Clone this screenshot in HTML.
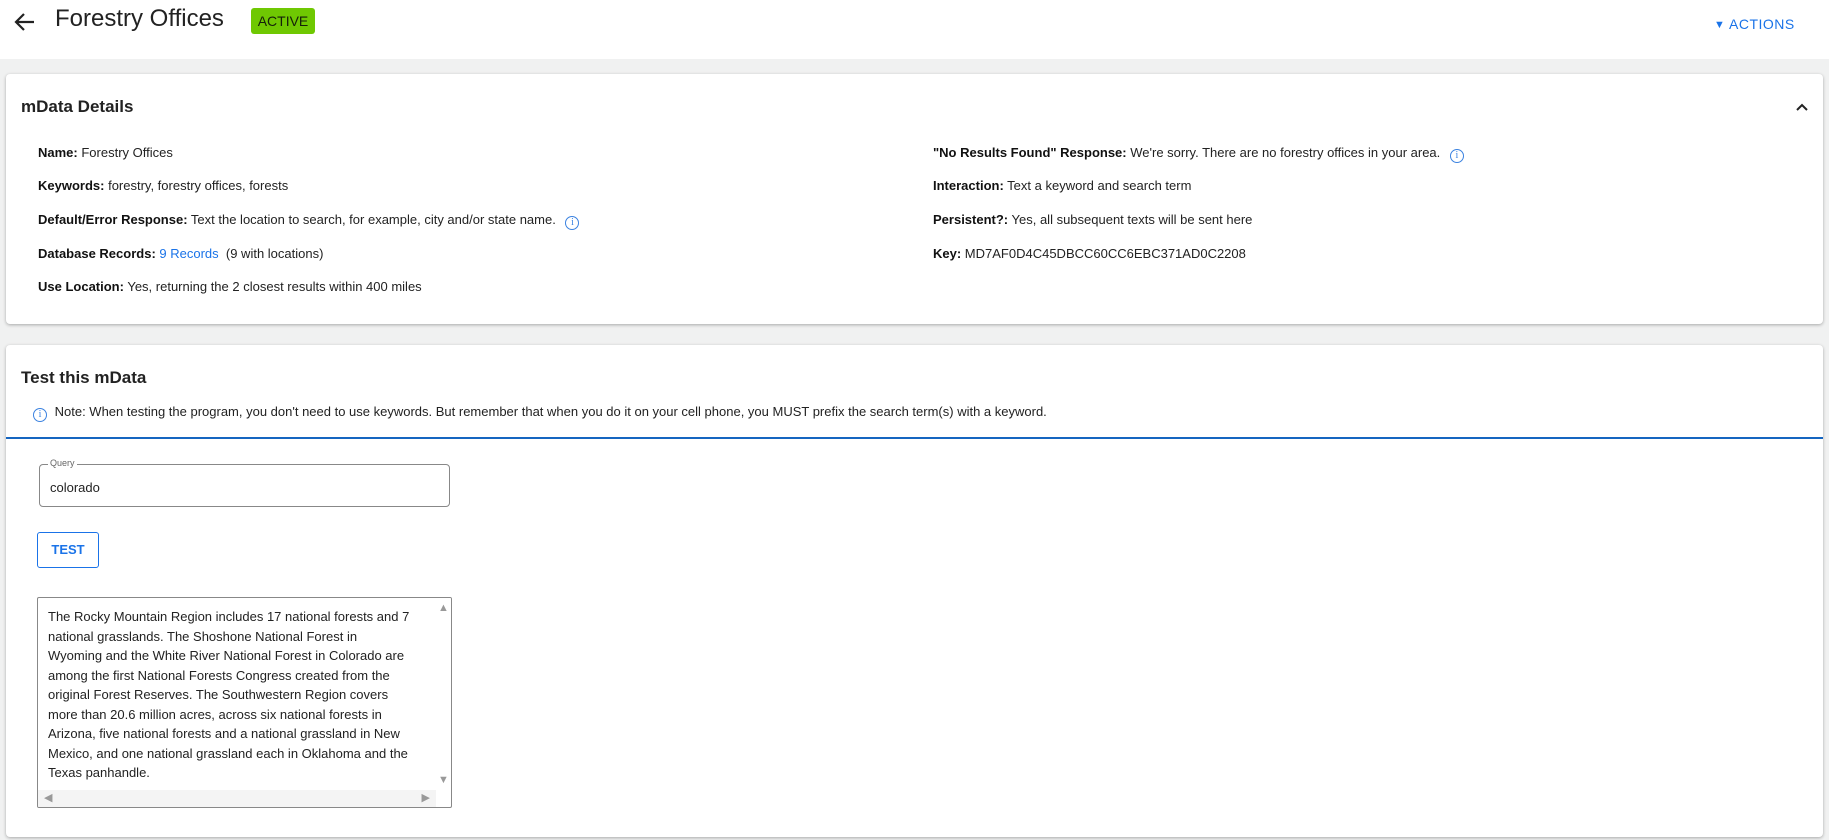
<!DOCTYPE html>
<html><head><meta charset="utf-8"><style>
*{margin:0;padding:0;box-sizing:border-box}
body{width:1829px;height:840px;background:#f0f1f1;font-family:"Liberation Sans",sans-serif;color:#222;position:relative;overflow:hidden}
.a{position:absolute;white-space:nowrap}
.hdr{position:absolute;left:0;top:0;width:1829px;height:59px;background:#fff}
.card{position:absolute;left:6px;width:1817px;background:#fff;border-radius:4px;box-shadow:0 1px 3px rgba(0,0,0,.3)}
.row{position:absolute;font-size:13px;line-height:16px;white-space:nowrap;color:#222}
.row b{font-weight:bold;color:#111}
.info{display:inline-block;width:14px;height:14px;border:1.3px solid #3b82e0;border-radius:50%;color:#3b82e0;font-size:10px;line-height:11px;text-align:center;vertical-align:-1px;margin-left:6px;font-family:"Liberation Serif",serif}
a{color:#1a73e8;text-decoration:none}
</style></head><body>
<div class="hdr"></div>
<svg class="a" style="left:14px;top:12px" width="22" height="20" viewBox="0 0 22 20"><path d="M20 10H3M10 2L2 10l8 8" stroke="#222" stroke-width="2.2" fill="none"/></svg>
<div class="a" style="left:55px;top:5px;font-size:24px;color:#222">Forestry Offices</div>
<div class="a" style="left:251px;top:8px;width:64px;height:26px;background:#6fc802;border-radius:3px;font-size:14px;line-height:26px;text-align:center;color:#15200a">ACTIVE</div>
<div class="a" style="left:1714px;top:16px;font-size:14px;color:#1a73e8;letter-spacing:0.5px;line-height:16px"><span style="font-size:11px;vertical-align:1px">▼</span> ACTIONS</div>

<div class="card" style="top:74px;height:250px"></div>
<div class="a" style="left:21px;top:97px;font-size:17px;font-weight:bold;color:#222">mData Details</div>
<svg class="a" style="left:1795px;top:102px" width="14" height="10" viewBox="0 0 14 10"><path d="M2 8l5-5 5 5" stroke="#222" stroke-width="2" fill="none"/></svg>
<div class="row" style="left:38px;top:145px"><b>Name:</b> Forestry Offices</div>
<div class="row" style="left:38px;top:178px"><b>Keywords:</b> forestry, forestry offices, forests</div>
<div class="row" style="left:38px;top:212px"><b>Default/Error Response:</b> Text the location to search, for example, city and/or state name. <span class="info">i</span></div>
<div class="row" style="left:38px;top:246px"><b>Database Records:</b> <a>9 Records</a> &nbsp;(9 with locations)</div>
<div class="row" style="left:38px;top:279px"><b>Use Location:</b> Yes, returning the 2 closest results within 400 miles</div>
<div class="row" style="left:933px;top:145px"><b>"No Results Found" Response:</b> We're sorry. There are no forestry offices in your area. <span class="info">i</span></div>
<div class="row" style="left:933px;top:178px"><b>Interaction:</b> Text a keyword and search term</div>
<div class="row" style="left:933px;top:212px"><b>Persistent?:</b> Yes, all subsequent texts will be sent here</div>
<div class="row" style="left:933px;top:246px"><b>Key:</b> MD7AF0D4C45DBCC60CC6EBC371AD0C2208</div>

<div class="card" style="top:345px;height:492px"></div>
<div class="a" style="left:21px;top:368px;font-size:17px;font-weight:bold;color:#222">Test this mData</div>
<div class="row" style="left:28px;top:404px"><span class="info" style="margin-left:5px;margin-right:4px">i</span> Note: When testing the program, you don't need to use keywords. But remember that when you do it on your cell phone, you MUST prefix the search term(s) with a keyword.</div>
<div class="a" style="left:6px;top:437px;width:1817px;height:2px;background:#1565c0"></div>
<div class="a" style="left:39px;top:464px;width:411px;height:43px;border:1px solid #888;border-radius:4px"></div>
<div class="a" style="left:48px;top:458px;font-size:9px;color:#666;background:#fff;padding:0 2px">Query</div>
<div class="a" style="left:50px;top:480px;font-size:13px;color:#222">colorado</div>
<div class="a" style="left:37px;top:532px;width:62px;height:36px;border:1px solid #1a73e8;border-radius:3px;color:#1a73e8;font-size:13px;font-weight:bold;line-height:34px;text-align:center">TEST</div>
<div class="a" style="left:37px;top:597px;width:415px;height:211px;border:1px solid #888;border-radius:2px;overflow:hidden">
<div style="position:absolute;left:10px;top:9px;font-size:13px;line-height:19.5px;color:#222;white-space:nowrap">The Rocky Mountain Region includes 17 national forests and 7<br>national grasslands. The Shoshone National Forest in<br>Wyoming and the White River National Forest in Colorado are<br>among the first National Forests Congress created from the<br>original Forest Reserves. The Southwestern Region covers<br>more than 20.6 million acres, across six national forests in<br>Arizona, five national forests and a national grassland in New<br>Mexico, and one national grassland each in Oklahoma and the<br>Texas panhandle.</div>
<div style="position:absolute;right:0;top:0;width:15px;height:192px;background:#fff;color:#999;font-size:11px;text-align:center"><div style="margin-top:4px">▲</div><div style="position:absolute;bottom:4px;width:15px">▼</div></div>
<div style="position:absolute;left:0;bottom:0;width:398px;height:17px;background:#f4f4f4;color:#999;font-size:11px;line-height:17px"><span style="margin-left:6px">◀</span><span style="position:absolute;right:6px">▶</span></div>
</div>
</body></html>
